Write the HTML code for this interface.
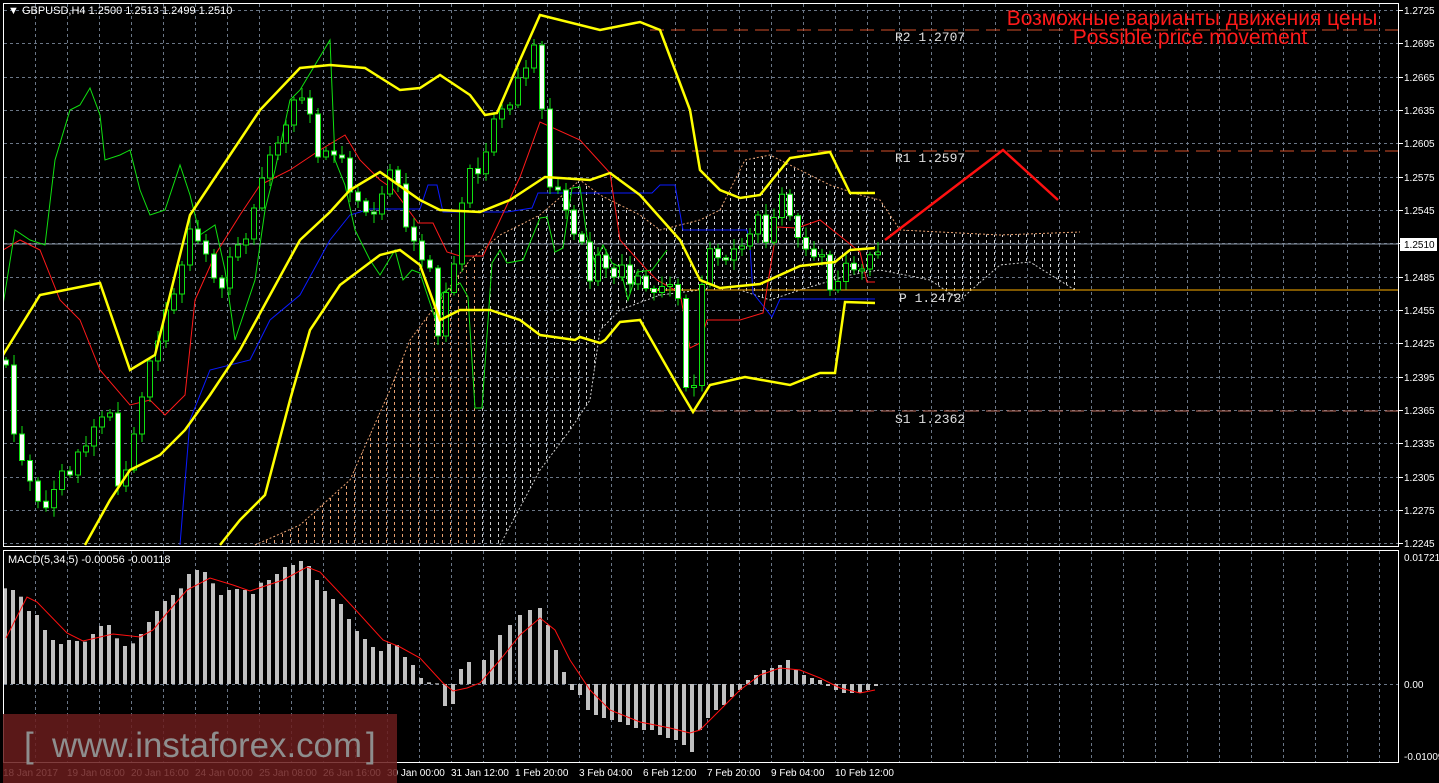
<!DOCTYPE html>
<html><head><meta charset="utf-8"><style>
html,body{margin:0;padding:0;background:#000;width:1439px;height:783px;overflow:hidden}
svg{display:block;font-family:"Liberation Sans",sans-serif}
</style></head><body>
<svg id="s" width="1439" height="783" xmlns="http://www.w3.org/2000/svg">
<rect width="1439" height="783" fill="#000"/>
<defs>
<pattern id="pPeach" x="2" y="0" width="8" height="6" patternUnits="userSpaceOnUse"><rect x="0" y="0" width="1" height="3" fill="#e8a070"/></pattern>
<pattern id="pGrey" x="2" y="0" width="8" height="6" patternUnits="userSpaceOnUse"><rect x="0" y="0" width="1" height="3" fill="#d0d0d0"/></pattern>
<clipPath id="mainclip"><rect x="4" y="4" width="1395" height="542"/></clipPath>
<clipPath id="leftc"><rect x="0" y="0" width="480" height="550"/></clipPath>
<clipPath id="rightc"><rect x="480" y="0" width="700" height="550"/></clipPath>
</defs>
<g id="grid" stroke="#6a7686" stroke-width="1" stroke-dasharray="3,3"></g>
<g clip-path="url(#mainclip)">
<polygon clip-path="url(#leftc)" fill="url(#pPeach)" points="255,545 300,525 350,480 390,390 410,340 440,300 470,260 500,235 540,215 580,180 600,195 640,215 660,230 700,220 720,210 745,160 770,155 800,170 830,185 860,195 880,200 900,230 1000,235 1080,232 1075,290 1030,262 1000,265 960,300 930,280 880,270 850,275 800,290 770,300 740,290 700,290 660,295 620,310 600,330 590,400 570,430 540,470 500,545"/>
<polygon clip-path="url(#rightc)" fill="url(#pGrey)" points="255,545 300,525 350,480 390,390 410,340 440,300 470,260 500,235 540,215 580,180 600,195 640,215 660,230 700,220 720,210 745,160 770,155 800,170 830,185 860,195 880,200 900,230 1000,235 1080,232 1075,290 1030,262 1000,265 960,300 930,280 880,270 850,275 800,290 770,300 740,290 700,290 660,295 620,310 600,330 590,400 570,430 540,470 500,545"/>
<polyline fill="none" stroke="#e8a070" stroke-width="1" stroke-dasharray="2,2" points="255,545 300,525 350,480 390,390 410,340 440,300 470,260 500,235 540,215 580,180 600,195 640,215 660,230 700,220 720,210 745,160 770,155 800,170 830,185 860,195 880,200 900,230 1000,235 1080,232"/>
<polyline fill="none" stroke="#cccccc" stroke-width="1" stroke-dasharray="2,2" points="500,545 540,470 570,430 590,400 600,330 620,310 660,295 700,290 740,290 770,300 800,290 850,275 880,270 930,280 960,300 1000,265 1030,262 1075,290"/>
<line x1="650" y1="30" x2="1399" y2="30" stroke="#d4502a" stroke-dasharray="14,7"/>
<line x1="650" y1="151" x2="1399" y2="151" stroke="#d4502a" stroke-dasharray="14,7"/>
<line x1="650" y1="290" x2="1399" y2="290" stroke="#ffb000"/>
<line x1="650" y1="411" x2="1399" y2="411" stroke="#c07060" stroke-dasharray="14,7"/>
<line x1="4" y1="244" x2="1399" y2="244" stroke="#8a96a6"/>
<polyline fill="none" stroke="#0a1aff" stroke-width="1" points="180,545 190,420 210,370 250,360 270,320 300,295 330,240 350,215 370,209 420,209 428,185 437,185 443,212 507,212 532,208 538,193 652,193 660,185 675,185 683,230 747,230 750,247 753,293 772,317 780,299 875,299"/>
<polyline fill="none" stroke="#ff1a1a" stroke-width="1" points="3,250 20,240 40,250 60,300 80,320 100,370 130,405 150,400 165,415 185,395 195,300 215,255 240,215 260,185 290,170 320,150 345,135 360,160 380,180 393,189 418,223 433,223 447,252 460,256 483,256 500,220 520,177 540,122 580,140 610,173 620,240 647,270 657,280 680,293 690,348 700,343 707,320 740,320 763,313 777,227 797,228 820,220 860,252 867,282 875,282"/>
<polyline fill="none" stroke="#10e010" stroke-width="1" points="3,305 15,230 30,240 45,245 55,160 70,110 80,105 90,88 100,115 105,160 120,155 130,150 140,190 150,215 165,210 180,165 190,195 200,235 215,225 225,270 235,340 245,310 255,280 265,210 275,170 290,100 300,90 315,65 330,40 335,160 345,185 355,230 370,260 380,275 395,250 403,280 412,270 420,273 435,318 442,293 460,283 468,297 475,408 482,408 492,263 500,250 507,263 523,260 540,218 547,217 555,252 563,248 572,188 580,187 587,237 595,263 603,245 612,263 620,267 628,300 637,272 652,270 667,250"/>
<g id="candles"></g>
<polyline fill="none" stroke="#ffff00" stroke-width="2.5" points="3,355 40,295 100,283 130,370 155,355 190,215 230,155 260,110 300,68 330,65 365,68 400,90 420,88 440,75 470,95 485,115 497,113 520,60 540,15 600,30 640,22 660,30 690,110 700,170 720,190 740,198 760,195 790,158 830,152 850,193 875,193"/>
<polyline fill="none" stroke="#ffff00" stroke-width="2.5" points="85,545 110,500 130,470 160,455 185,430 210,395 240,350 270,295 300,240 330,212 350,190 380,172 420,200 440,210 480,212 510,200 545,177 590,180 610,173 640,195 680,240 700,280 720,288 760,284 800,266 835,262 850,250 875,248"/>
<polyline fill="none" stroke="#ffff00" stroke-width="2.5" points="220,545 240,520 265,495 290,400 310,330 340,285 380,255 400,250 420,265 440,320 460,310 490,310 520,320 540,335 575,340 580,337 600,343 605,340 620,322 640,320 660,355 680,390 693,412 710,385 745,377 790,385 820,373 835,373 845,302 875,303"/>
<polyline fill="none" stroke="#ff1010" stroke-width="2.5" points="885,240 1003,150 1058,200"/>
</g>
<g font-family="Liberation Mono, monospace" font-size="13" fill="#e0e0e0">
<text x="895" y="41">R2 1.2707</text>
<text x="895" y="162">R1 1.2597</text>
<text x="899" y="302">P 1.2472</text>
<text x="895" y="423">S1 1.2362</text>
</g>
<text x="1192" y="25" font-size="21" fill="#ff1a1a" text-anchor="middle">Возможные варианты движения цены</text>
<text x="1190" y="44" font-size="21" fill="#ff1a1a" text-anchor="middle">Possible price movement</text>
<g id="macd"></g>
<polyline fill="none" stroke="#ff1010" stroke-width="1" points="6,638 27,597 37,602 67,633 83,641 113,634 140,637 153,630 167,613 187,590 210,578 233,585 250,591 283,580 307,567 320,572 353,607 383,640 400,647 420,658 443,683 453,691 467,688 480,683 500,660 520,635 540,618 555,630 570,660 590,690 610,710 640,722 670,728 690,733 700,730 720,710 740,690 760,675 780,668 800,670 820,678 840,688 860,693 875,690"/>
<rect x="3.5" y="3.5" width="1395" height="543" fill="none" stroke="#fff"/>
<rect x="3.5" y="550.5" width="1395" height="212" fill="none" stroke="#fff"/>
<g id="axis" font-size="10" fill="#fff"></g>
<rect x="1400" y="238" width="37" height="13" fill="#fff"/>
<text x="1404" y="248" font-size="10" fill="#000">1.2510</text>
<text x="8" y="14" font-size="11" fill="#fff">▼ GBPUSD,H4  1.2500 1.2513 1.2499 1.2510</text>
<text x="8" y="563" font-size="11" fill="#fff">MACD(5,34,5) -0.00056 -0.00118</text>
<text x="1404" y="561" font-size="10" fill="#fff">0.01721</text>
<text x="1404" y="688" font-size="10" fill="#fff">0.00</text>
<text x="1404" y="760" font-size="10" fill="#fff">-0.01009</text>
<rect x="3" y="714" width="394" height="69" fill="#6a1c1c" opacity="0.85"/>
<text x="24" y="757" font-size="35" fill="#8e8e8e">[ </text>
<text x="52" y="757" font-size="35" fill="#8e8e8e" textLength="310" lengthAdjust="spacingAndGlyphs">www.instaforex.com</text>
<text x="366" y="757" font-size="35" fill="#8e8e8e">]</text>
</svg>
<script>
var NS="http://www.w3.org/2000/svg";
function el(p,t,a){var e=document.createElementNS(NS,t);for(var k in a)e.setAttribute(k,a[k]);p.appendChild(e);return e;}
var g=document.getElementById('grid');
for(var k=0;k<=16;k++){var y=Math.round(10+k*33.33)+.5;el(g,'line',{x1:4,y1:y,x2:1399,y2:y});}
el(g,'line',{x1:4,y1:684.5,x2:1399,y2:684.5});
for(var x=35;x<1399;x+=32){el(g,'line',{x1:x+.5,y1:4,x2:x+.5,y2:546});el(g,'line',{x1:x+.5,y1:551,x2:x+.5,y2:762});}
var ax=document.getElementById('axis');
for(var k=0;k<=16;k++){var y=Math.round(10+k*33.33);var p=(1.2725-k*0.003).toFixed(4);
 el(ax,'line',{x1:1399,y1:y+.5,x2:1403,y2:y+.5,stroke:'#fff'});
 var t=el(ax,'text',{x:1404,y:y+4});t.textContent=p;}
var dl=["18 Jan 2017","19 Jan 08:00","20 Jan 16:00","24 Jan 00:00","25 Jan 08:00","26 Jan 16:00","30 Jan 00:00","31 Jan 12:00","1 Feb 20:00","3 Feb 04:00","6 Feb 12:00","7 Feb 20:00","9 Feb 04:00","10 Feb 12:00"];
for(var i=0;i<dl.length;i++){var t=el(ax,'text',{x:3+64*i,y:776});t.textContent=dl[i];}
var kp=[[5,360],[12,430],[20,450],[28,480],[36,500],[44,505],[52,500],[60,470],[70,470],[80,450],[90,440],[100,420],[110,410],[118,490],[126,470],[134,430],[142,400],[150,360],[160,330],[170,300],[180,280],[190,230],[200,240],[210,270],[220,290],[230,260],[240,240],[250,230],[260,180],[270,160],[280,140],[290,110],[300,95],[310,110],[318,160],[326,150],[334,150],[342,160],[350,190],[360,210],[370,215],[380,205],[390,170],[398,180],[406,230],[414,240],[422,255],[430,270],[440,350],[448,280],[456,260],[464,180],[472,170],[480,175],[490,130],[500,110],[510,100],[520,75],[530,60],[538,40],[546,180],[556,190],[566,210],[574,230],[582,245],[590,280],[598,250],[606,270],[614,275],[622,270],[630,285],[640,270],[648,300],[656,290],[664,280],[672,290],[680,300],[688,410],[696,380],[704,250],[712,255],[720,260],[730,255],[740,250],[750,230],[760,215],[768,250],[776,200],[784,195],[792,220],[800,250],[808,250],[816,255],[824,260],[832,300],[840,270],[848,265],[856,270],[864,262],[872,255],[878,250]];
function interp(x){for(var i=0;i<kp.length-1;i++){if(x<=kp[i+1][0]){var a=kp[i],b=kp[i+1];return a[1]+(b[1]-a[1])*(x-a[0])/(b[0]-a[0]);}}return kp[kp.length-1][1];}
var cg=document.getElementById('candles');var prev=360;
for(var i=0;i<110;i++){var x=6+8*i;if(x>878)break;var c=interp(x);var o=prev;
 var n=((i*37)%11)-5;c+=n;var hi=Math.min(o,c)-3-(i*7%9);var lo=Math.max(o,c)+3+(i*5%8);
 el(cg,'line',{x1:x,y1:hi,x2:x,y2:lo,stroke:'#10e010'});
 var yt=Math.min(o,c),h=Math.max(2,Math.abs(o-c));
 el(cg,'rect',{x:x-2.5,y:yt,width:5,height:h,fill:(c<o)?'#000':'#fff',stroke:'#10e010','stroke-width':1});
 prev=c;}
var v=[175,180,200,243,255,300,330,342,330,333,335,312,288,285,325,348,340,312,276,243,213,195,175,132,120,126,160,195,180,177,180,192,158,150,132,111,105,93,108,150,183,207,222,267,303,327,351,363,342,345,381,405,444,457,460];
var tops=v.map(function(a){return 530+a/3;});tops.push(706,704,669,662);
var rest=[[484,660],[492,650],[500,635],[510,625],[520,615],[530,610],[540,608],[548,625],[556,650],[564,672],[572,690],[580,695],[588,710],[596,715],[604,718],[612,720],[620,722],[628,725],[636,728],[644,730],[652,730],[660,735],[668,738],[676,740],[684,745],[692,752],[700,730],[708,718],[716,710],[724,705],[732,697],[740,690],[748,680],[756,675],[764,670],[772,668],[780,665],[788,660],[796,670],[804,675],[812,678],[820,680],[828,686],[836,690],[844,693],[852,693],[860,693],[868,690],[876,686]];
var mg=document.getElementById('macd');
function bar(x,t){var y1=Math.min(t,684),y2=Math.max(t,684);el(mg,'rect',{x:x-2,y:y1,width:4,height:Math.max(1,y2-y1),fill:'#c0c0c0'});}
for(var i=0;i<tops.length;i++)bar(5+8*i,tops[i]);
for(var i=0;i<rest.length;i++)bar(rest[i][0],rest[i][1]);
</script>
</body></html>
